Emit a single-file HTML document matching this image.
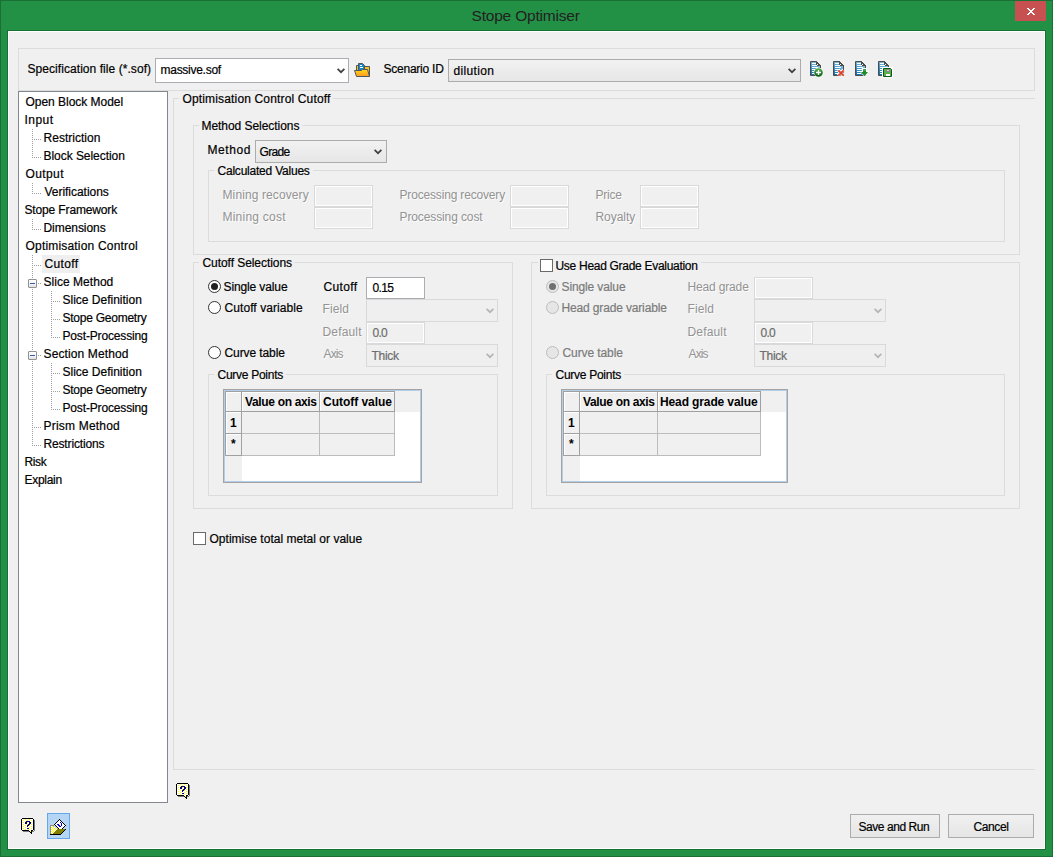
<!DOCTYPE html>
<html><head><meta charset="utf-8"><title>Stope Optimiser</title>
<style>
html,body{margin:0;padding:0;}
body{width:1053px;height:857px;position:relative;overflow:hidden;background:#229045;font-family:"Liberation Sans", sans-serif;font-size:12px;}
body>div,body>span,body>svg{position:absolute;}
.t{line-height:13px;white-space:nowrap;-webkit-text-stroke-width:0.2px;}
i{position:absolute;width:1px;height:1px;background:#a0a0a0;}
</style></head><body>
<div style="left:0;top:0;width:1053px;height:857px;background:#229045;border:1px solid #1b6f35;box-sizing:border-box"></div>
<span class="t" style="left:471.5px;top:7px;color:#222;font-size:15.5px;line-height:18px;letter-spacing:-0.193px;-webkit-text-stroke-width:0;">Stope Optimiser</span>
<div style="left:1015px;top:1px;width:31px;height:20px;background:#c75050"></div>
<svg style="left:1027px;top:8px" width="8" height="7" shape-rendering="crispEdges"><rect x="0" y="0" width="1" height="1" fill="#fff"/><rect x="1" y="0" width="1" height="1" fill="#fff"/><rect x="6" y="0" width="1" height="1" fill="#fff"/><rect x="7" y="0" width="1" height="1" fill="#fff"/><rect x="1" y="1" width="1" height="1" fill="#fff"/><rect x="2" y="1" width="1" height="1" fill="#fff"/><rect x="5" y="1" width="1" height="1" fill="#fff"/><rect x="6" y="1" width="1" height="1" fill="#fff"/><rect x="2" y="2" width="1" height="1" fill="#fff"/><rect x="3" y="2" width="1" height="1" fill="#fff"/><rect x="4" y="2" width="1" height="1" fill="#fff"/><rect x="5" y="2" width="1" height="1" fill="#fff"/><rect x="3" y="3" width="1" height="1" fill="#fff"/><rect x="4" y="3" width="1" height="1" fill="#fff"/><rect x="2" y="4" width="1" height="1" fill="#fff"/><rect x="3" y="4" width="1" height="1" fill="#fff"/><rect x="4" y="4" width="1" height="1" fill="#fff"/><rect x="5" y="4" width="1" height="1" fill="#fff"/><rect x="1" y="5" width="1" height="1" fill="#fff"/><rect x="2" y="5" width="1" height="1" fill="#fff"/><rect x="5" y="5" width="1" height="1" fill="#fff"/><rect x="6" y="5" width="1" height="1" fill="#fff"/><rect x="0" y="6" width="1" height="1" fill="#fff"/><rect x="1" y="6" width="1" height="1" fill="#fff"/><rect x="6" y="6" width="1" height="1" fill="#fff"/><rect x="7" y="6" width="1" height="1" fill="#fff"/></svg>
<div style="left:7px;top:30px;width:1039px;height:820px;border:1px solid #167232;box-sizing:border-box"></div>
<div style="left:8px;top:31px;width:1037px;height:818px;border:1px solid #fff;background:#f0f0f0;box-sizing:border-box"></div>
<div style="left:18px;top:48px;width:1017px;height:43px;border:1px solid #dcdcdc;box-sizing:border-box"></div>
<span class="t" style="left:27.5px;top:63px;color:#000;letter-spacing:0.060px;">Specification file (*.sof)</span>
<div style="left:155px;top:58px;width:194px;height:25px;border:1px solid #abadb3;background:#fff;box-sizing:border-box"></div>
<span class="t" style="left:160.5px;top:64px;color:#000;letter-spacing:-0.270px;">massive.sof</span>
<svg style="left:337px;top:68px" width="8" height="6" viewBox="0 0 8 6"><path d="M0.6 0.8 L4 4.2 L7.4 0.8" fill="none" stroke="#404040" stroke-width="1.7"/></svg>
<span class="t" style="left:383.5px;top:63px;color:#000;letter-spacing:-0.240px;">Scenario ID</span>
<div style="left:448px;top:59px;width:353px;height:23px;border:1px solid #acacac;background:linear-gradient(#f2f2f2,#e6e6e6);box-sizing:border-box"></div>
<span class="t" style="left:453.5px;top:65px;color:#000;letter-spacing:0.357px;">dilution</span>
<svg style="left:788px;top:68px" width="8" height="6" viewBox="0 0 8 6"><path d="M0.6 0.8 L4 4.2 L7.4 0.8" fill="none" stroke="#404040" stroke-width="1.7"/></svg>
<div style="left:18px;top:91px;width:150px;height:712px;border:1px solid #828790;background:#fff;box-sizing:border-box"></div>
<div style="left:42px;top:255px;width:38px;height:18px;background:#efefef"></div>
<span class="t" style="left:25.5px;top:96px;color:#000;letter-spacing:-0.027px;">Open Block Model</span>
<span class="t" style="left:24.5px;top:114px;color:#000;letter-spacing:0.450px;">Input</span>
<span class="t" style="left:43.5px;top:132px;color:#000;letter-spacing:0.020px;">Restriction</span>
<span class="t" style="left:43.5px;top:150px;color:#000;letter-spacing:-0.050px;">Block Selection</span>
<span class="t" style="left:25.5px;top:168px;color:#000;letter-spacing:0.400px;">Output</span>
<span class="t" style="left:44.5px;top:186px;color:#000;letter-spacing:-0.033px;">Verifications</span>
<span class="t" style="left:24.5px;top:204px;color:#000;letter-spacing:-0.143px;">Stope Framework</span>
<span class="t" style="left:43.5px;top:222px;color:#000;letter-spacing:-0.056px;">Dimensions</span>
<span class="t" style="left:25.5px;top:240px;color:#000;letter-spacing:0.184px;">Optimisation Control</span>
<span class="t" style="left:44.5px;top:258px;color:#000;letter-spacing:0.360px;">Cutoff</span>
<span class="t" style="left:43.5px;top:276px;color:#000;letter-spacing:0.036px;">Slice Method</span>
<span class="t" style="left:62.5px;top:294px;color:#000;">Slice Definition</span>
<span class="t" style="left:62.5px;top:312px;color:#000;letter-spacing:-0.246px;">Stope Geometry</span>
<span class="t" style="left:62.5px;top:330px;color:#000;letter-spacing:-0.157px;">Post-Processing</span>
<span class="t" style="left:43.5px;top:348px;color:#000;letter-spacing:0.123px;">Section Method</span>
<span class="t" style="left:62.5px;top:366px;color:#000;">Slice Definition</span>
<span class="t" style="left:62.5px;top:384px;color:#000;letter-spacing:-0.246px;">Stope Geometry</span>
<span class="t" style="left:62.5px;top:402px;color:#000;letter-spacing:-0.157px;">Post-Processing</span>
<span class="t" style="left:43.5px;top:420px;color:#000;letter-spacing:0.200px;">Prism Method</span>
<span class="t" style="left:43.5px;top:438px;color:#000;letter-spacing:-0.155px;">Restrictions</span>
<span class="t" style="left:24.5px;top:456px;color:#000;letter-spacing:-0.400px;">Risk</span>
<span class="t" style="left:24.5px;top:474px;color:#000;letter-spacing:-0.283px;">Explain</span>
<div style="left:173px;top:98px;width:862px;height:672px;border:1px solid #dcdcdc;box-sizing:border-box;border-right:0"></div>
<div style="left:179px;top:96px;width:154px;height:5px;background:#f0f0f0"></div>
<span class="t" style="left:182.5px;top:93px;color:#000;letter-spacing:0.154px;">Optimisation Control Cutoff</span>
<div style="left:193px;top:125px;width:827px;height:130px;border:1px solid #dcdcdc;box-sizing:border-box"></div>
<div style="left:199px;top:123px;width:103.19999999999999px;height:5px;background:#f0f0f0"></div>
<span class="t" style="left:201.5px;top:120px;color:#000;letter-spacing:-0.050px;">Method Selections</span>
<span class="t" style="left:207.5px;top:144px;color:#000;letter-spacing:0.560px;">Method</span>
<div style="left:255px;top:140px;width:132px;height:23px;border:1px solid #acacac;background:linear-gradient(#f2f2f2,#e6e6e6);box-sizing:border-box"></div>
<span class="t" style="left:259.5px;top:146px;color:#000;letter-spacing:-0.650px;">Grade</span>
<svg style="left:374px;top:149px" width="8" height="6" viewBox="0 0 8 6"><path d="M0.6 0.8 L4 4.2 L7.4 0.8" fill="none" stroke="#404040" stroke-width="1.7"/></svg>
<div style="left:208px;top:170px;width:797px;height:72px;border:1px solid #dcdcdc;box-sizing:border-box"></div>
<div style="left:214px;top:168px;width:98.5px;height:5px;background:#f0f0f0"></div>
<span class="t" style="left:217.5px;top:165px;color:#000;letter-spacing:-0.219px;">Calculated Values</span>
<span class="t" style="left:222.5px;top:189px;color:#939393;-webkit-text-stroke-width:0;text-shadow:1px 1px 0 rgba(255,255,255,0.85);letter-spacing:0.107px;">Mining recovery</span>
<span class="t" style="left:222.5px;top:211px;color:#939393;-webkit-text-stroke-width:0;text-shadow:1px 1px 0 rgba(255,255,255,0.85);letter-spacing:0.230px;">Mining cost</span>
<div style="left:314px;top:185px;width:59px;height:22px;border:1px solid #d9d9d9;box-shadow:inset 0 0 0 1px #fff;background:#f0f0f0;box-sizing:border-box"></div>
<div style="left:314px;top:207px;width:59px;height:22px;border:1px solid #d9d9d9;box-shadow:inset 0 0 0 1px #fff;background:#f0f0f0;box-sizing:border-box"></div>
<span class="t" style="left:399.5px;top:189px;color:#939393;-webkit-text-stroke-width:0;text-shadow:1px 1px 0 rgba(255,255,255,0.85);letter-spacing:-0.167px;">Processing recovery</span>
<span class="t" style="left:399.5px;top:211px;color:#939393;-webkit-text-stroke-width:0;text-shadow:1px 1px 0 rgba(255,255,255,0.85);letter-spacing:-0.114px;">Processing cost</span>
<div style="left:510px;top:185px;width:59px;height:22px;border:1px solid #d9d9d9;box-shadow:inset 0 0 0 1px #fff;background:#f0f0f0;box-sizing:border-box"></div>
<div style="left:510px;top:207px;width:59px;height:22px;border:1px solid #d9d9d9;box-shadow:inset 0 0 0 1px #fff;background:#f0f0f0;box-sizing:border-box"></div>
<span class="t" style="left:595.5px;top:189px;color:#939393;-webkit-text-stroke-width:0;text-shadow:1px 1px 0 rgba(255,255,255,0.85);letter-spacing:-0.200px;">Price</span>
<span class="t" style="left:595.5px;top:211px;color:#939393;-webkit-text-stroke-width:0;text-shadow:1px 1px 0 rgba(255,255,255,0.85);letter-spacing:-0.050px;">Royalty</span>
<div style="left:640px;top:185px;width:59px;height:22px;border:1px solid #d9d9d9;box-shadow:inset 0 0 0 1px #fff;background:#f0f0f0;box-sizing:border-box"></div>
<div style="left:640px;top:207px;width:59px;height:22px;border:1px solid #d9d9d9;box-shadow:inset 0 0 0 1px #fff;background:#f0f0f0;box-sizing:border-box"></div>
<div style="left:193px;top:262px;width:320px;height:247px;border:1px solid #dcdcdc;box-sizing:border-box"></div>
<div style="left:199px;top:260px;width:95px;height:5px;background:#f0f0f0"></div>
<span class="t" style="left:202.5px;top:257px;color:#000;letter-spacing:-0.062px;">Cutoff Selections</span>
<svg style="left:208px;top:280px" width="13" height="13" viewBox="0 0 13 13"><circle cx="6.5" cy="6.5" r="6" fill="#ffffff" stroke="#333333" stroke-width="1"/><circle cx="3.5" cy="3.5" r="3.5" fill="#212121" transform="translate(3,3)"/></svg>
<span class="t" style="left:223.5px;top:281px;color:#000;letter-spacing:-0.118px;">Single value</span>
<svg style="left:208px;top:301px" width="13" height="13" viewBox="0 0 13 13"><circle cx="6.5" cy="6.5" r="6" fill="#ffffff" stroke="#333333" stroke-width="1"/></svg>
<span class="t" style="left:224.5px;top:302px;color:#000;letter-spacing:0.071px;">Cutoff variable</span>
<svg style="left:208px;top:346px" width="13" height="13" viewBox="0 0 13 13"><circle cx="6.5" cy="6.5" r="6" fill="#ffffff" stroke="#333333" stroke-width="1"/></svg>
<span class="t" style="left:224.5px;top:347px;color:#000;letter-spacing:-0.100px;">Curve table</span>
<span class="t" style="left:323.5px;top:281px;color:#000;letter-spacing:0.360px;">Cutoff</span>
<div style="left:366px;top:277px;width:59px;height:22px;border:1px solid #abadb3;background:#fff;box-sizing:border-box"></div>
<span class="t" style="left:372.5px;top:282px;color:#000;letter-spacing:-0.667px;">0.15</span>
<span class="t" style="left:322.5px;top:303px;color:#939393;-webkit-text-stroke-width:0;text-shadow:1px 1px 0 rgba(255,255,255,0.85);letter-spacing:0.075px;">Field</span>
<div style="left:366px;top:299px;width:132px;height:23px;border:1px solid #d9d9d9;background:#efefef;box-sizing:border-box"></div>
<svg style="left:486px;top:308px" width="8" height="6" viewBox="0 0 8 6"><path d="M0.6 0.8 L4 4.2 L7.4 0.8" fill="none" stroke="#b5b5b5" stroke-width="1.7"/></svg>
<span class="t" style="left:322.5px;top:326px;color:#939393;-webkit-text-stroke-width:0;text-shadow:1px 1px 0 rgba(255,255,255,0.85);letter-spacing:0.167px;">Default</span>
<div style="left:366px;top:322px;width:59px;height:22px;border:1px solid #d9d9d9;box-shadow:inset 0 0 0 1px #fff;background:#f0f0f0;box-sizing:border-box"></div>
<span class="t" style="left:372.5px;top:327px;color:#6d6d6d;letter-spacing:-0.700px;">0.0</span>
<span class="t" style="left:323.5px;top:348px;color:#939393;-webkit-text-stroke-width:0;text-shadow:1px 1px 0 rgba(255,255,255,0.85);letter-spacing:-0.867px;">Axis</span>
<div style="left:366px;top:344px;width:132px;height:23px;border:1px solid #d9d9d9;background:#efefef;box-sizing:border-box"></div>
<span class="t" style="left:371.5px;top:350px;color:#6d6d6d;letter-spacing:-0.300px;">Thick</span>
<svg style="left:486px;top:353px" width="8" height="6" viewBox="0 0 8 6"><path d="M0.6 0.8 L4 4.2 L7.4 0.8" fill="none" stroke="#b5b5b5" stroke-width="1.7"/></svg>
<div style="left:208px;top:374px;width:290px;height:122px;border:1px solid #dcdcdc;box-sizing:border-box"></div>
<div style="left:214px;top:372px;width:72px;height:5px;background:#f0f0f0"></div>
<span class="t" style="left:217.5px;top:369px;color:#000;letter-spacing:-0.273px;">Curve Points</span>
<div style="left:531px;top:262px;width:489px;height:247px;border:1px solid #dcdcdc;box-sizing:border-box"></div>
<div style="left:538px;top:255px;width:163px;height:16px;background:#f0f0f0"></div>
<div style="left:540px;top:259px;width:13px;height:13px;border:1px solid #6a6a6a;background:#fff;box-sizing:border-box"></div>
<span class="t" style="left:555.5px;top:260px;color:#000;letter-spacing:-0.292px;">Use Head Grade Evaluation</span>
<svg style="left:546px;top:280px" width="13" height="13" viewBox="0 0 13 13"><circle cx="6.5" cy="6.5" r="6" fill="#e6e6e6" stroke="#bcbcbc" stroke-width="1"/><circle cx="3.5" cy="3.5" r="3.5" fill="#707070" transform="translate(3,3)"/></svg>
<span class="t" style="left:561.5px;top:281px;color:#7b7b7b;letter-spacing:-0.118px;">Single value</span>
<svg style="left:546px;top:301px" width="13" height="13" viewBox="0 0 13 13"><circle cx="6.5" cy="6.5" r="6" fill="#e6e6e6" stroke="#bcbcbc" stroke-width="1"/></svg>
<span class="t" style="left:561.5px;top:302px;color:#7b7b7b;letter-spacing:-0.150px;">Head grade variable</span>
<svg style="left:546px;top:346px" width="13" height="13" viewBox="0 0 13 13"><circle cx="6.5" cy="6.5" r="6" fill="#e6e6e6" stroke="#bcbcbc" stroke-width="1"/></svg>
<span class="t" style="left:562.5px;top:347px;color:#7b7b7b;letter-spacing:-0.100px;">Curve table</span>
<span class="t" style="left:687.5px;top:281px;color:#939393;-webkit-text-stroke-width:0;text-shadow:1px 1px 0 rgba(255,255,255,0.85);letter-spacing:-0.156px;">Head grade</span>
<div style="left:754px;top:277px;width:59px;height:22px;border:1px solid #d9d9d9;box-shadow:inset 0 0 0 1px #fff;background:#f0f0f0;box-sizing:border-box"></div>
<span class="t" style="left:687.5px;top:303px;color:#939393;-webkit-text-stroke-width:0;text-shadow:1px 1px 0 rgba(255,255,255,0.85);letter-spacing:0.075px;">Field</span>
<div style="left:754px;top:299px;width:132px;height:23px;border:1px solid #d9d9d9;background:#efefef;box-sizing:border-box"></div>
<svg style="left:874px;top:308px" width="8" height="6" viewBox="0 0 8 6"><path d="M0.6 0.8 L4 4.2 L7.4 0.8" fill="none" stroke="#b5b5b5" stroke-width="1.7"/></svg>
<span class="t" style="left:687.5px;top:326px;color:#939393;-webkit-text-stroke-width:0;text-shadow:1px 1px 0 rgba(255,255,255,0.85);letter-spacing:0.167px;">Default</span>
<div style="left:754px;top:322px;width:59px;height:22px;border:1px solid #d9d9d9;box-shadow:inset 0 0 0 1px #fff;background:#f0f0f0;box-sizing:border-box"></div>
<span class="t" style="left:760.5px;top:327px;color:#6d6d6d;letter-spacing:-0.700px;">0.0</span>
<span class="t" style="left:688.5px;top:348px;color:#939393;-webkit-text-stroke-width:0;text-shadow:1px 1px 0 rgba(255,255,255,0.85);letter-spacing:-0.867px;">Axis</span>
<div style="left:754px;top:344px;width:132px;height:23px;border:1px solid #d9d9d9;background:#efefef;box-sizing:border-box"></div>
<span class="t" style="left:759.5px;top:350px;color:#6d6d6d;letter-spacing:-0.300px;">Thick</span>
<svg style="left:874px;top:353px" width="8" height="6" viewBox="0 0 8 6"><path d="M0.6 0.8 L4 4.2 L7.4 0.8" fill="none" stroke="#b5b5b5" stroke-width="1.7"/></svg>
<div style="left:546px;top:374px;width:459px;height:122px;border:1px solid #dcdcdc;box-sizing:border-box"></div>
<div style="left:552px;top:372px;width:72px;height:5px;background:#f0f0f0"></div>
<span class="t" style="left:555.5px;top:369px;color:#000;letter-spacing:-0.273px;">Curve Points</span>
<div style="left:193px;top:532px;width:13px;height:13px;border:1px solid #6a6a6a;background:#fff;box-sizing:border-box"></div>
<span class="t" style="left:209.5px;top:533px;color:#000;letter-spacing:0.021px;">Optimise total metal or value</span>
<div style="left:850px;top:814px;width:90px;height:24px;border:1px solid #acacac;background:linear-gradient(#f0f0f0,#e5e5e5);box-sizing:border-box"></div>
<span class="t" style="left:858.5px;top:821px;color:#000;letter-spacing:-0.436px;">Save and Run</span>
<div style="left:948px;top:814px;width:86px;height:24px;border:1px solid #acacac;background:linear-gradient(#f0f0f0,#e5e5e5);box-sizing:border-box"></div>
<span class="t" style="left:973.5px;top:821px;color:#000;letter-spacing:-0.400px;">Cancel</span>
<div style="left:223px;top:389px;width:199px;height:94px;border:1px solid #a3a3a3;box-shadow:inset 0 0 0 1px #b4cde8;background:#fff;box-sizing:border-box"></div>
<div style="left:225px;top:391px;width:195px;height:21px;background:#f0f0f0"></div>
<div style="left:225px;top:391px;width:17px;height:90px;background:#f0f0f0"></div>
<div style="left:241px;top:411px;width:79px;height:23px;border:1px solid #bcbcbc;background:#f0f0f0;box-sizing:border-box"></div>
<div style="left:319px;top:411px;width:76px;height:23px;border:1px solid #bcbcbc;background:#f0f0f0;box-sizing:border-box"></div>
<div style="left:241px;top:433px;width:79px;height:23px;border:1px solid #bcbcbc;background:#f0f0f0;box-sizing:border-box"></div>
<div style="left:319px;top:433px;width:76px;height:23px;border:1px solid #bcbcbc;background:#f0f0f0;box-sizing:border-box"></div>
<div style="left:225px;top:391px;width:17px;height:21px;border:1px solid #a0a0a0;box-shadow:inset 1px 1px 0 #fff;background:#f0f0f0;box-sizing:border-box"></div>
<div style="left:241px;top:391px;width:79px;height:21px;border:1px solid #a0a0a0;box-shadow:inset 1px 1px 0 #fff;background:#f0f0f0;box-sizing:border-box"></div>
<div style="left:319px;top:391px;width:76px;height:21px;border:1px solid #a0a0a0;box-shadow:inset 1px 1px 0 #fff;background:#f0f0f0;box-sizing:border-box"></div>
<div style="left:225px;top:411px;width:17px;height:23px;border:1px solid #a0a0a0;box-shadow:inset 1px 1px 0 #fff;background:#f0f0f0;box-sizing:border-box"></div>
<div style="left:225px;top:433px;width:17px;height:23px;border:1px solid #a0a0a0;box-shadow:inset 1px 1px 0 #fff;background:#f0f0f0;box-sizing:border-box"></div>
<span class="t" style="left:245px;top:396px;color:#000;font-weight:bold;-webkit-text-stroke-width:0;letter-spacing:-0.333px;">Value on axis</span>
<span class="t" style="left:323px;top:396px;color:#000;font-weight:bold;-webkit-text-stroke-width:0;letter-spacing:-0.036px;">Cutoff value</span>
<span class="t" style="left:230px;top:417px;color:#000;font-weight:bold;-webkit-text-stroke-width:0;">1</span>
<span class="t" style="left:231px;top:438px;color:#000;font-weight:bold;-webkit-text-stroke-width:0;">*</span>
<div style="left:561px;top:389px;width:227px;height:94px;border:1px solid #a3a3a3;box-shadow:inset 0 0 0 1px #b4cde8;background:#fff;box-sizing:border-box"></div>
<div style="left:563px;top:391px;width:223px;height:21px;background:#f0f0f0"></div>
<div style="left:563px;top:391px;width:17px;height:90px;background:#f0f0f0"></div>
<div style="left:579px;top:411px;width:79px;height:23px;border:1px solid #bcbcbc;background:#f0f0f0;box-sizing:border-box"></div>
<div style="left:657px;top:411px;width:104px;height:23px;border:1px solid #bcbcbc;background:#f0f0f0;box-sizing:border-box"></div>
<div style="left:579px;top:433px;width:79px;height:23px;border:1px solid #bcbcbc;background:#f0f0f0;box-sizing:border-box"></div>
<div style="left:657px;top:433px;width:104px;height:23px;border:1px solid #bcbcbc;background:#f0f0f0;box-sizing:border-box"></div>
<div style="left:563px;top:391px;width:17px;height:21px;border:1px solid #a0a0a0;box-shadow:inset 1px 1px 0 #fff;background:#f0f0f0;box-sizing:border-box"></div>
<div style="left:579px;top:391px;width:79px;height:21px;border:1px solid #a0a0a0;box-shadow:inset 1px 1px 0 #fff;background:#f0f0f0;box-sizing:border-box"></div>
<div style="left:657px;top:391px;width:104px;height:21px;border:1px solid #a0a0a0;box-shadow:inset 1px 1px 0 #fff;background:#f0f0f0;box-sizing:border-box"></div>
<div style="left:563px;top:411px;width:17px;height:23px;border:1px solid #a0a0a0;box-shadow:inset 1px 1px 0 #fff;background:#f0f0f0;box-sizing:border-box"></div>
<div style="left:563px;top:433px;width:17px;height:23px;border:1px solid #a0a0a0;box-shadow:inset 1px 1px 0 #fff;background:#f0f0f0;box-sizing:border-box"></div>
<span class="t" style="left:583px;top:396px;color:#000;font-weight:bold;-webkit-text-stroke-width:0;letter-spacing:-0.333px;">Value on axis</span>
<span class="t" style="left:660px;top:396px;color:#000;font-weight:bold;-webkit-text-stroke-width:0;letter-spacing:-0.120px;">Head grade value</span>
<span class="t" style="left:568px;top:417px;color:#000;font-weight:bold;-webkit-text-stroke-width:0;">1</span>
<span class="t" style="left:569px;top:438px;color:#000;font-weight:bold;-webkit-text-stroke-width:0;">*</span>
<i style="left:32px;top:129px"></i>
<i style="left:32px;top:131px"></i>
<i style="left:32px;top:133px"></i>
<i style="left:32px;top:135px"></i>
<i style="left:32px;top:137px"></i>
<i style="left:32px;top:139px"></i>
<i style="left:32px;top:141px"></i>
<i style="left:32px;top:143px"></i>
<i style="left:32px;top:145px"></i>
<i style="left:32px;top:147px"></i>
<i style="left:32px;top:149px"></i>
<i style="left:32px;top:151px"></i>
<i style="left:32px;top:153px"></i>
<i style="left:32px;top:155px"></i>
<i style="left:32px;top:157px"></i>
<i style="left:34px;top:139px"></i>
<i style="left:36px;top:139px"></i>
<i style="left:38px;top:139px"></i>
<i style="left:40px;top:139px"></i>
<i style="left:34px;top:157px"></i>
<i style="left:36px;top:157px"></i>
<i style="left:38px;top:157px"></i>
<i style="left:40px;top:157px"></i>
<i style="left:32px;top:183px"></i>
<i style="left:32px;top:185px"></i>
<i style="left:32px;top:187px"></i>
<i style="left:32px;top:189px"></i>
<i style="left:32px;top:191px"></i>
<i style="left:32px;top:193px"></i>
<i style="left:34px;top:193px"></i>
<i style="left:36px;top:193px"></i>
<i style="left:38px;top:193px"></i>
<i style="left:40px;top:193px"></i>
<i style="left:32px;top:219px"></i>
<i style="left:32px;top:221px"></i>
<i style="left:32px;top:223px"></i>
<i style="left:32px;top:225px"></i>
<i style="left:32px;top:227px"></i>
<i style="left:32px;top:229px"></i>
<i style="left:34px;top:229px"></i>
<i style="left:36px;top:229px"></i>
<i style="left:38px;top:229px"></i>
<i style="left:40px;top:229px"></i>
<i style="left:32px;top:255px"></i>
<i style="left:32px;top:257px"></i>
<i style="left:32px;top:259px"></i>
<i style="left:32px;top:261px"></i>
<i style="left:32px;top:263px"></i>
<i style="left:32px;top:265px"></i>
<i style="left:32px;top:267px"></i>
<i style="left:32px;top:269px"></i>
<i style="left:32px;top:271px"></i>
<i style="left:32px;top:273px"></i>
<i style="left:32px;top:275px"></i>
<i style="left:32px;top:277px"></i>
<i style="left:32px;top:279px"></i>
<i style="left:32px;top:281px"></i>
<i style="left:32px;top:283px"></i>
<i style="left:32px;top:285px"></i>
<i style="left:32px;top:287px"></i>
<i style="left:32px;top:289px"></i>
<i style="left:32px;top:291px"></i>
<i style="left:32px;top:293px"></i>
<i style="left:32px;top:295px"></i>
<i style="left:32px;top:297px"></i>
<i style="left:32px;top:299px"></i>
<i style="left:32px;top:301px"></i>
<i style="left:32px;top:303px"></i>
<i style="left:32px;top:305px"></i>
<i style="left:32px;top:307px"></i>
<i style="left:32px;top:309px"></i>
<i style="left:32px;top:311px"></i>
<i style="left:32px;top:313px"></i>
<i style="left:32px;top:315px"></i>
<i style="left:32px;top:317px"></i>
<i style="left:32px;top:319px"></i>
<i style="left:32px;top:321px"></i>
<i style="left:32px;top:323px"></i>
<i style="left:32px;top:325px"></i>
<i style="left:32px;top:327px"></i>
<i style="left:32px;top:329px"></i>
<i style="left:32px;top:331px"></i>
<i style="left:32px;top:333px"></i>
<i style="left:32px;top:335px"></i>
<i style="left:32px;top:337px"></i>
<i style="left:32px;top:339px"></i>
<i style="left:32px;top:341px"></i>
<i style="left:32px;top:343px"></i>
<i style="left:32px;top:345px"></i>
<i style="left:32px;top:347px"></i>
<i style="left:32px;top:349px"></i>
<i style="left:32px;top:351px"></i>
<i style="left:32px;top:353px"></i>
<i style="left:32px;top:355px"></i>
<i style="left:32px;top:357px"></i>
<i style="left:32px;top:359px"></i>
<i style="left:32px;top:361px"></i>
<i style="left:32px;top:363px"></i>
<i style="left:32px;top:365px"></i>
<i style="left:32px;top:367px"></i>
<i style="left:32px;top:369px"></i>
<i style="left:32px;top:371px"></i>
<i style="left:32px;top:373px"></i>
<i style="left:32px;top:375px"></i>
<i style="left:32px;top:377px"></i>
<i style="left:32px;top:379px"></i>
<i style="left:32px;top:381px"></i>
<i style="left:32px;top:383px"></i>
<i style="left:32px;top:385px"></i>
<i style="left:32px;top:387px"></i>
<i style="left:32px;top:389px"></i>
<i style="left:32px;top:391px"></i>
<i style="left:32px;top:393px"></i>
<i style="left:32px;top:395px"></i>
<i style="left:32px;top:397px"></i>
<i style="left:32px;top:399px"></i>
<i style="left:32px;top:401px"></i>
<i style="left:32px;top:403px"></i>
<i style="left:32px;top:405px"></i>
<i style="left:32px;top:407px"></i>
<i style="left:32px;top:409px"></i>
<i style="left:32px;top:411px"></i>
<i style="left:32px;top:413px"></i>
<i style="left:32px;top:415px"></i>
<i style="left:32px;top:417px"></i>
<i style="left:32px;top:419px"></i>
<i style="left:32px;top:421px"></i>
<i style="left:32px;top:423px"></i>
<i style="left:32px;top:425px"></i>
<i style="left:32px;top:427px"></i>
<i style="left:32px;top:429px"></i>
<i style="left:32px;top:431px"></i>
<i style="left:32px;top:433px"></i>
<i style="left:32px;top:435px"></i>
<i style="left:32px;top:437px"></i>
<i style="left:32px;top:439px"></i>
<i style="left:32px;top:441px"></i>
<i style="left:32px;top:443px"></i>
<i style="left:32px;top:445px"></i>
<i style="left:34px;top:265px"></i>
<i style="left:36px;top:265px"></i>
<i style="left:38px;top:265px"></i>
<i style="left:40px;top:265px"></i>
<i style="left:34px;top:427px"></i>
<i style="left:36px;top:427px"></i>
<i style="left:38px;top:427px"></i>
<i style="left:40px;top:427px"></i>
<i style="left:34px;top:445px"></i>
<i style="left:36px;top:445px"></i>
<i style="left:38px;top:445px"></i>
<i style="left:40px;top:445px"></i>
<i style="left:38px;top:283px"></i>
<i style="left:40px;top:283px"></i>
<i style="left:51px;top:291px"></i>
<i style="left:51px;top:293px"></i>
<i style="left:51px;top:295px"></i>
<i style="left:51px;top:297px"></i>
<i style="left:51px;top:299px"></i>
<i style="left:51px;top:301px"></i>
<i style="left:51px;top:303px"></i>
<i style="left:51px;top:305px"></i>
<i style="left:51px;top:307px"></i>
<i style="left:51px;top:309px"></i>
<i style="left:51px;top:311px"></i>
<i style="left:51px;top:313px"></i>
<i style="left:51px;top:315px"></i>
<i style="left:51px;top:317px"></i>
<i style="left:51px;top:319px"></i>
<i style="left:51px;top:321px"></i>
<i style="left:51px;top:323px"></i>
<i style="left:51px;top:325px"></i>
<i style="left:51px;top:327px"></i>
<i style="left:51px;top:329px"></i>
<i style="left:51px;top:331px"></i>
<i style="left:51px;top:333px"></i>
<i style="left:51px;top:335px"></i>
<i style="left:51px;top:337px"></i>
<i style="left:53px;top:301px"></i>
<i style="left:55px;top:301px"></i>
<i style="left:57px;top:301px"></i>
<i style="left:59px;top:301px"></i>
<i style="left:53px;top:319px"></i>
<i style="left:55px;top:319px"></i>
<i style="left:57px;top:319px"></i>
<i style="left:59px;top:319px"></i>
<i style="left:53px;top:337px"></i>
<i style="left:55px;top:337px"></i>
<i style="left:57px;top:337px"></i>
<i style="left:59px;top:337px"></i>
<div style="left:28px;top:279px;width:9px;height:9px;border:1px solid #919191;border-radius:1px;background:linear-gradient(#fff,#f4f4f4 50%,#e2e2e2);box-sizing:border-box"></div>
<div style="left:30px;top:283px;width:5px;height:1px;background:#3c5bab"></div>
<i style="left:38px;top:355px"></i>
<i style="left:40px;top:355px"></i>
<i style="left:51px;top:363px"></i>
<i style="left:51px;top:365px"></i>
<i style="left:51px;top:367px"></i>
<i style="left:51px;top:369px"></i>
<i style="left:51px;top:371px"></i>
<i style="left:51px;top:373px"></i>
<i style="left:51px;top:375px"></i>
<i style="left:51px;top:377px"></i>
<i style="left:51px;top:379px"></i>
<i style="left:51px;top:381px"></i>
<i style="left:51px;top:383px"></i>
<i style="left:51px;top:385px"></i>
<i style="left:51px;top:387px"></i>
<i style="left:51px;top:389px"></i>
<i style="left:51px;top:391px"></i>
<i style="left:51px;top:393px"></i>
<i style="left:51px;top:395px"></i>
<i style="left:51px;top:397px"></i>
<i style="left:51px;top:399px"></i>
<i style="left:51px;top:401px"></i>
<i style="left:51px;top:403px"></i>
<i style="left:51px;top:405px"></i>
<i style="left:51px;top:407px"></i>
<i style="left:51px;top:409px"></i>
<i style="left:53px;top:373px"></i>
<i style="left:55px;top:373px"></i>
<i style="left:57px;top:373px"></i>
<i style="left:59px;top:373px"></i>
<i style="left:53px;top:391px"></i>
<i style="left:55px;top:391px"></i>
<i style="left:57px;top:391px"></i>
<i style="left:59px;top:391px"></i>
<i style="left:53px;top:409px"></i>
<i style="left:55px;top:409px"></i>
<i style="left:57px;top:409px"></i>
<i style="left:59px;top:409px"></i>
<div style="left:28px;top:351px;width:9px;height:9px;border:1px solid #919191;border-radius:1px;background:linear-gradient(#fff,#f4f4f4 50%,#e2e2e2);box-sizing:border-box"></div>
<div style="left:30px;top:355px;width:5px;height:1px;background:#3c5bab"></div>
<svg style="left:809px;top:60px" width="18" height="18" viewBox="0 0 18 18"><defs><linearGradient id="dg" x1="0.8" y1="0" x2="0.2" y2="1"><stop offset="0" stop-color="#9ad0ef"/><stop offset="1" stop-color="#0f6fae"/></linearGradient><linearGradient id="gg" x1="0" y1="0" x2="0" y2="1"><stop offset="0" stop-color="#58b04c"/><stop offset="1" stop-color="#005a12"/></linearGradient></defs><path d="M1.5 1.5 H7.5 L11.5 5.5 V15.5 H1.5 Z" fill="url(#dg)" stroke="#4b4b4b"/><path d="M7.5 1.5 L11.5 5.5 H7.5 Z" fill="#4b4b4b" stroke="#4b4b4b"/><rect x="8" y="4" width="1" height="1" fill="#fff"/><rect x="3" y="3" width="4" height="1" fill="#fff"/><rect x="3" y="5" width="5" height="1" fill="#fff"/><rect x="3" y="7" width="6" height="1" fill="#fff"/><rect x="3" y="9" width="5" height="1" fill="#fff"/><rect x="3" y="11" width="4" height="1" fill="#fff"/><rect x="3" y="13" width="4" height="1" fill="#fff"/><circle cx="9.5" cy="12.5" r="4.7" fill="#fff"/><circle cx="9.5" cy="12.5" r="4.3" fill="url(#gg)"/><path d="M7 12.5 H12 M9.5 10 V15" stroke="#fff" stroke-width="1.4"/></svg>
<svg style="left:832px;top:60px" width="18" height="18" viewBox="0 0 18 18"><path d="M1.5 1.5 H7.5 L11.5 5.5 V15.5 H1.5 Z" fill="url(#dg)" stroke="#4b4b4b"/><path d="M7.5 1.5 L11.5 5.5 H7.5 Z" fill="#4b4b4b" stroke="#4b4b4b"/><rect x="8" y="4" width="1" height="1" fill="#fff"/><rect x="3" y="3" width="4" height="1" fill="#fff"/><rect x="3" y="5" width="5" height="1" fill="#fff"/><rect x="3" y="7" width="6" height="1" fill="#fff"/><rect x="3" y="9" width="5" height="1" fill="#fff"/><rect x="3" y="11" width="4" height="1" fill="#fff"/><rect x="3" y="13" width="4" height="1" fill="#fff"/><path d="M6 10 L11.5 15.5 M11.5 10 L6 15.5" stroke="#fff" stroke-width="3.2"/><path d="M6.3 10.3 L11.7 15.7 M11.7 10.3 L6.3 15.7" stroke="#d8402a" stroke-width="1.9"/></svg>
<svg style="left:854px;top:60px" width="18" height="18" viewBox="0 0 18 18"><path d="M1.5 1.5 H7.5 L11.5 5.5 V15.5 H1.5 Z" fill="url(#dg)" stroke="#4b4b4b"/><path d="M7.5 1.5 L11.5 5.5 H7.5 Z" fill="#4b4b4b" stroke="#4b4b4b"/><rect x="8" y="4" width="1" height="1" fill="#fff"/><rect x="3" y="3" width="4" height="1" fill="#fff"/><rect x="3" y="5" width="5" height="1" fill="#fff"/><rect x="3" y="7" width="6" height="1" fill="#fff"/><rect x="3" y="9" width="5" height="1" fill="#fff"/><rect x="3" y="11" width="4" height="1" fill="#fff"/><rect x="3" y="13" width="4" height="1" fill="#fff"/><path d="M8 8 H13 V11 H15.5 L10.5 17 L5.5 11 H8 Z" fill="#fff"/><path d="M9 9 H12 V12 H14 L10.5 16.2 L7 12 H9 Z" fill="#1f8a2a"/><path d="M9 9 H12 V11 H9 Z" fill="#3aa542"/></svg>
<svg style="left:877px;top:60px" width="18" height="18" viewBox="0 0 18 18"><path d="M1.5 1.5 H7.5 L11.5 5.5 V15.5 H1.5 Z" fill="url(#dg)" stroke="#4b4b4b"/><path d="M7.5 1.5 L11.5 5.5 H7.5 Z" fill="#4b4b4b" stroke="#4b4b4b"/><rect x="8" y="4" width="1" height="1" fill="#fff"/><rect x="3" y="3" width="4" height="1" fill="#fff"/><rect x="3" y="5" width="5" height="1" fill="#fff"/><rect x="3" y="7" width="6" height="1" fill="#fff"/><rect x="3" y="9" width="5" height="1" fill="#fff"/><rect x="3" y="11" width="4" height="1" fill="#fff"/><rect x="3" y="13" width="4" height="1" fill="#fff"/><rect x="5" y="7" width="11" height="11" fill="#fff"/><path d="M6.5 8.5 H13.5 L14.5 9.5 V16.5 H6.5 Z" fill="#5bb04c" stroke="#0b5a16"/><rect x="9" y="9" width="4" height="3" fill="#888"/><rect x="10" y="10" width="2" height="1" fill="#d0d0d0"/><rect x="9" y="14" width="4" height="2" fill="#fff"/></svg>
<svg style="left:353px;top:62px" width="18" height="16" viewBox="0 0 18 16"><defs><linearGradient id="fg" x1="0" y1="0" x2="0" y2="1"><stop offset="0" stop-color="#ffd617"/><stop offset="1" stop-color="#ff9a1f"/></linearGradient></defs><path d="M3.5 8.5 V3.5 H5.5 V8.5 M11.5 8.5 V4.5 H16.5 V14.5" fill="#f7c21a" stroke="#4e5660"/><path d="M5.5 9.5 V1.5 H9.5 L11.5 3.5 V9.5" fill="#1b87c9" stroke="#4e5660"/><rect x="7" y="3" width="2" height="1" fill="#fff"/><rect x="7" y="5" width="3" height="1" fill="#fff"/><path d="M1.5 8.5 H8.5 L9.5 7.5 H14.5 L16.5 14.5 H3.5 Z" fill="url(#fg)" stroke="#4e5660"/></svg>
<svg style="left:176px;top:783px" width="14" height="16" shape-rendering="crispEdges"><rect x="1" y="0" width="1" height="1" fill="#000"/><rect x="2" y="0" width="1" height="1" fill="#000"/><rect x="3" y="0" width="1" height="1" fill="#000"/><rect x="4" y="0" width="1" height="1" fill="#000"/><rect x="5" y="0" width="1" height="1" fill="#000"/><rect x="6" y="0" width="1" height="1" fill="#000"/><rect x="7" y="0" width="1" height="1" fill="#000"/><rect x="8" y="0" width="1" height="1" fill="#000"/><rect x="9" y="0" width="1" height="1" fill="#000"/><rect x="10" y="0" width="1" height="1" fill="#000"/><rect x="11" y="0" width="1" height="1" fill="#000"/><rect x="0" y="1" width="1" height="1" fill="#000"/><rect x="1" y="1" width="1" height="1" fill="#fff"/><rect x="2" y="1" width="1" height="1" fill="#fff"/><rect x="3" y="1" width="1" height="1" fill="#fff"/><rect x="4" y="1" width="1" height="1" fill="#ffff00"/><rect x="5" y="1" width="1" height="1" fill="#fff"/><rect x="6" y="1" width="1" height="1" fill="#fff"/><rect x="7" y="1" width="1" height="1" fill="#fff"/><rect x="8" y="1" width="1" height="1" fill="#ffff00"/><rect x="9" y="1" width="1" height="1" fill="#fff"/><rect x="10" y="1" width="1" height="1" fill="#fff"/><rect x="11" y="1" width="1" height="1" fill="#fff"/><rect x="12" y="1" width="1" height="1" fill="#000"/><rect x="0" y="2" width="1" height="1" fill="#000"/><rect x="1" y="2" width="1" height="1" fill="#fff"/><rect x="2" y="2" width="1" height="1" fill="#ffff00"/><rect x="3" y="2" width="1" height="1" fill="#fff"/><rect x="4" y="2" width="1" height="1" fill="#fff"/><rect x="5" y="2" width="1" height="1" fill="#fff"/><rect x="6" y="2" width="1" height="1" fill="#ffff00"/><rect x="7" y="2" width="1" height="1" fill="#fff"/><rect x="8" y="2" width="1" height="1" fill="#fff"/><rect x="9" y="2" width="1" height="1" fill="#fff"/><rect x="10" y="2" width="1" height="1" fill="#ffff00"/><rect x="11" y="2" width="1" height="1" fill="#fff"/><rect x="12" y="2" width="1" height="1" fill="#000"/><rect x="13" y="2" width="1" height="1" fill="#7a7a7a"/><rect x="0" y="3" width="1" height="1" fill="#000"/><rect x="1" y="3" width="1" height="1" fill="#fff"/><rect x="2" y="3" width="1" height="1" fill="#fff"/><rect x="3" y="3" width="1" height="1" fill="#fff"/><rect x="4" y="3" width="1" height="1" fill="#ffff00"/><rect x="5" y="3" width="1" height="1" fill="#000080"/><rect x="6" y="3" width="1" height="1" fill="#000080"/><rect x="7" y="3" width="1" height="1" fill="#000080"/><rect x="8" y="3" width="1" height="1" fill="#000080"/><rect x="9" y="3" width="1" height="1" fill="#fff"/><rect x="10" y="3" width="1" height="1" fill="#fff"/><rect x="11" y="3" width="1" height="1" fill="#fff"/><rect x="12" y="3" width="1" height="1" fill="#000"/><rect x="13" y="3" width="1" height="1" fill="#7a7a7a"/><rect x="0" y="4" width="1" height="1" fill="#000"/><rect x="1" y="4" width="1" height="1" fill="#fff"/><rect x="2" y="4" width="1" height="1" fill="#ffff00"/><rect x="3" y="4" width="1" height="1" fill="#fff"/><rect x="4" y="4" width="1" height="1" fill="#000080"/><rect x="5" y="4" width="1" height="1" fill="#000080"/><rect x="6" y="4" width="1" height="1" fill="#ffff00"/><rect x="7" y="4" width="1" height="1" fill="#fff"/><rect x="8" y="4" width="1" height="1" fill="#000080"/><rect x="9" y="4" width="1" height="1" fill="#000080"/><rect x="10" y="4" width="1" height="1" fill="#ffff00"/><rect x="11" y="4" width="1" height="1" fill="#fff"/><rect x="12" y="4" width="1" height="1" fill="#000"/><rect x="13" y="4" width="1" height="1" fill="#7a7a7a"/><rect x="0" y="5" width="1" height="1" fill="#000"/><rect x="1" y="5" width="1" height="1" fill="#fff"/><rect x="2" y="5" width="1" height="1" fill="#fff"/><rect x="3" y="5" width="1" height="1" fill="#fff"/><rect x="4" y="5" width="1" height="1" fill="#000080"/><rect x="5" y="5" width="1" height="1" fill="#000080"/><rect x="6" y="5" width="1" height="1" fill="#fff"/><rect x="7" y="5" width="1" height="1" fill="#fff"/><rect x="8" y="5" width="1" height="1" fill="#000080"/><rect x="9" y="5" width="1" height="1" fill="#000080"/><rect x="10" y="5" width="1" height="1" fill="#fff"/><rect x="11" y="5" width="1" height="1" fill="#fff"/><rect x="12" y="5" width="1" height="1" fill="#000"/><rect x="13" y="5" width="1" height="1" fill="#7a7a7a"/><rect x="0" y="6" width="1" height="1" fill="#000"/><rect x="1" y="6" width="1" height="1" fill="#fff"/><rect x="2" y="6" width="1" height="1" fill="#ffff00"/><rect x="3" y="6" width="1" height="1" fill="#fff"/><rect x="4" y="6" width="1" height="1" fill="#fff"/><rect x="5" y="6" width="1" height="1" fill="#fff"/><rect x="6" y="6" width="1" height="1" fill="#ffff00"/><rect x="7" y="6" width="1" height="1" fill="#000080"/><rect x="8" y="6" width="1" height="1" fill="#000080"/><rect x="9" y="6" width="1" height="1" fill="#fff"/><rect x="10" y="6" width="1" height="1" fill="#ffff00"/><rect x="11" y="6" width="1" height="1" fill="#fff"/><rect x="12" y="6" width="1" height="1" fill="#000"/><rect x="13" y="6" width="1" height="1" fill="#7a7a7a"/><rect x="0" y="7" width="1" height="1" fill="#000"/><rect x="1" y="7" width="1" height="1" fill="#fff"/><rect x="2" y="7" width="1" height="1" fill="#fff"/><rect x="3" y="7" width="1" height="1" fill="#fff"/><rect x="4" y="7" width="1" height="1" fill="#ffff00"/><rect x="5" y="7" width="1" height="1" fill="#fff"/><rect x="6" y="7" width="1" height="1" fill="#000080"/><rect x="7" y="7" width="1" height="1" fill="#000080"/><rect x="8" y="7" width="1" height="1" fill="#ffff00"/><rect x="9" y="7" width="1" height="1" fill="#fff"/><rect x="10" y="7" width="1" height="1" fill="#fff"/><rect x="11" y="7" width="1" height="1" fill="#fff"/><rect x="12" y="7" width="1" height="1" fill="#000"/><rect x="13" y="7" width="1" height="1" fill="#7a7a7a"/><rect x="0" y="8" width="1" height="1" fill="#000"/><rect x="1" y="8" width="1" height="1" fill="#fff"/><rect x="2" y="8" width="1" height="1" fill="#ffff00"/><rect x="3" y="8" width="1" height="1" fill="#fff"/><rect x="4" y="8" width="1" height="1" fill="#fff"/><rect x="5" y="8" width="1" height="1" fill="#fff"/><rect x="6" y="8" width="1" height="1" fill="#000080"/><rect x="7" y="8" width="1" height="1" fill="#fff"/><rect x="8" y="8" width="1" height="1" fill="#fff"/><rect x="9" y="8" width="1" height="1" fill="#fff"/><rect x="10" y="8" width="1" height="1" fill="#ffff00"/><rect x="11" y="8" width="1" height="1" fill="#fff"/><rect x="12" y="8" width="1" height="1" fill="#000"/><rect x="13" y="8" width="1" height="1" fill="#7a7a7a"/><rect x="0" y="9" width="1" height="1" fill="#000"/><rect x="1" y="9" width="1" height="1" fill="#fff"/><rect x="2" y="9" width="1" height="1" fill="#fff"/><rect x="3" y="9" width="1" height="1" fill="#fff"/><rect x="4" y="9" width="1" height="1" fill="#ffff00"/><rect x="5" y="9" width="1" height="1" fill="#fff"/><rect x="6" y="9" width="1" height="1" fill="#fff"/><rect x="7" y="9" width="1" height="1" fill="#fff"/><rect x="8" y="9" width="1" height="1" fill="#ffff00"/><rect x="9" y="9" width="1" height="1" fill="#fff"/><rect x="10" y="9" width="1" height="1" fill="#fff"/><rect x="11" y="9" width="1" height="1" fill="#fff"/><rect x="12" y="9" width="1" height="1" fill="#000"/><rect x="13" y="9" width="1" height="1" fill="#7a7a7a"/><rect x="0" y="10" width="1" height="1" fill="#000"/><rect x="1" y="10" width="1" height="1" fill="#fff"/><rect x="2" y="10" width="1" height="1" fill="#ffff00"/><rect x="3" y="10" width="1" height="1" fill="#fff"/><rect x="4" y="10" width="1" height="1" fill="#fff"/><rect x="5" y="10" width="1" height="1" fill="#fff"/><rect x="6" y="10" width="1" height="1" fill="#000080"/><rect x="7" y="10" width="1" height="1" fill="#000080"/><rect x="8" y="10" width="1" height="1" fill="#fff"/><rect x="9" y="10" width="1" height="1" fill="#fff"/><rect x="10" y="10" width="1" height="1" fill="#ffff00"/><rect x="11" y="10" width="1" height="1" fill="#fff"/><rect x="12" y="10" width="1" height="1" fill="#000"/><rect x="13" y="10" width="1" height="1" fill="#7a7a7a"/><rect x="0" y="11" width="1" height="1" fill="#000"/><rect x="1" y="11" width="1" height="1" fill="#fff"/><rect x="2" y="11" width="1" height="1" fill="#fff"/><rect x="3" y="11" width="1" height="1" fill="#fff"/><rect x="4" y="11" width="1" height="1" fill="#ffff00"/><rect x="5" y="11" width="1" height="1" fill="#fff"/><rect x="6" y="11" width="1" height="1" fill="#fff"/><rect x="7" y="11" width="1" height="1" fill="#fff"/><rect x="8" y="11" width="1" height="1" fill="#ffff00"/><rect x="9" y="11" width="1" height="1" fill="#fff"/><rect x="10" y="11" width="1" height="1" fill="#fff"/><rect x="11" y="11" width="1" height="1" fill="#fff"/><rect x="12" y="11" width="1" height="1" fill="#000"/><rect x="13" y="11" width="1" height="1" fill="#7a7a7a"/><rect x="1" y="12" width="1" height="1" fill="#000"/><rect x="2" y="12" width="1" height="1" fill="#000"/><rect x="3" y="12" width="1" height="1" fill="#000"/><rect x="4" y="12" width="1" height="1" fill="#000"/><rect x="5" y="12" width="1" height="1" fill="#000"/><rect x="6" y="12" width="1" height="1" fill="#000"/><rect x="7" y="12" width="1" height="1" fill="#000"/><rect x="8" y="12" width="1" height="1" fill="#fff"/><rect x="9" y="12" width="1" height="1" fill="#fff"/><rect x="10" y="12" width="1" height="1" fill="#000"/><rect x="11" y="12" width="1" height="1" fill="#000"/><rect x="13" y="12" width="1" height="1" fill="#7a7a7a"/><rect x="2" y="13" width="1" height="1" fill="#7a7a7a"/><rect x="3" y="13" width="1" height="1" fill="#7a7a7a"/><rect x="4" y="13" width="1" height="1" fill="#7a7a7a"/><rect x="5" y="13" width="1" height="1" fill="#7a7a7a"/><rect x="6" y="13" width="1" height="1" fill="#7a7a7a"/><rect x="7" y="13" width="1" height="1" fill="#7a7a7a"/><rect x="8" y="13" width="1" height="1" fill="#000"/><rect x="9" y="13" width="1" height="1" fill="#ffff00"/><rect x="10" y="13" width="1" height="1" fill="#000"/><rect x="11" y="13" width="1" height="1" fill="#7a7a7a"/><rect x="12" y="13" width="1" height="1" fill="#7a7a7a"/><rect x="9" y="14" width="1" height="1" fill="#000"/><rect x="10" y="14" width="1" height="1" fill="#000"/><rect x="10" y="15" width="1" height="1" fill="#000"/></svg>
<svg style="left:21px;top:818px" width="14" height="16" shape-rendering="crispEdges"><rect x="1" y="0" width="1" height="1" fill="#000"/><rect x="2" y="0" width="1" height="1" fill="#000"/><rect x="3" y="0" width="1" height="1" fill="#000"/><rect x="4" y="0" width="1" height="1" fill="#000"/><rect x="5" y="0" width="1" height="1" fill="#000"/><rect x="6" y="0" width="1" height="1" fill="#000"/><rect x="7" y="0" width="1" height="1" fill="#000"/><rect x="8" y="0" width="1" height="1" fill="#000"/><rect x="9" y="0" width="1" height="1" fill="#000"/><rect x="10" y="0" width="1" height="1" fill="#000"/><rect x="11" y="0" width="1" height="1" fill="#000"/><rect x="0" y="1" width="1" height="1" fill="#000"/><rect x="1" y="1" width="1" height="1" fill="#fff"/><rect x="2" y="1" width="1" height="1" fill="#fff"/><rect x="3" y="1" width="1" height="1" fill="#fff"/><rect x="4" y="1" width="1" height="1" fill="#ffff00"/><rect x="5" y="1" width="1" height="1" fill="#fff"/><rect x="6" y="1" width="1" height="1" fill="#fff"/><rect x="7" y="1" width="1" height="1" fill="#fff"/><rect x="8" y="1" width="1" height="1" fill="#ffff00"/><rect x="9" y="1" width="1" height="1" fill="#fff"/><rect x="10" y="1" width="1" height="1" fill="#fff"/><rect x="11" y="1" width="1" height="1" fill="#fff"/><rect x="12" y="1" width="1" height="1" fill="#000"/><rect x="0" y="2" width="1" height="1" fill="#000"/><rect x="1" y="2" width="1" height="1" fill="#fff"/><rect x="2" y="2" width="1" height="1" fill="#ffff00"/><rect x="3" y="2" width="1" height="1" fill="#fff"/><rect x="4" y="2" width="1" height="1" fill="#fff"/><rect x="5" y="2" width="1" height="1" fill="#fff"/><rect x="6" y="2" width="1" height="1" fill="#ffff00"/><rect x="7" y="2" width="1" height="1" fill="#fff"/><rect x="8" y="2" width="1" height="1" fill="#fff"/><rect x="9" y="2" width="1" height="1" fill="#fff"/><rect x="10" y="2" width="1" height="1" fill="#ffff00"/><rect x="11" y="2" width="1" height="1" fill="#fff"/><rect x="12" y="2" width="1" height="1" fill="#000"/><rect x="13" y="2" width="1" height="1" fill="#7a7a7a"/><rect x="0" y="3" width="1" height="1" fill="#000"/><rect x="1" y="3" width="1" height="1" fill="#fff"/><rect x="2" y="3" width="1" height="1" fill="#fff"/><rect x="3" y="3" width="1" height="1" fill="#fff"/><rect x="4" y="3" width="1" height="1" fill="#ffff00"/><rect x="5" y="3" width="1" height="1" fill="#000080"/><rect x="6" y="3" width="1" height="1" fill="#000080"/><rect x="7" y="3" width="1" height="1" fill="#000080"/><rect x="8" y="3" width="1" height="1" fill="#000080"/><rect x="9" y="3" width="1" height="1" fill="#fff"/><rect x="10" y="3" width="1" height="1" fill="#fff"/><rect x="11" y="3" width="1" height="1" fill="#fff"/><rect x="12" y="3" width="1" height="1" fill="#000"/><rect x="13" y="3" width="1" height="1" fill="#7a7a7a"/><rect x="0" y="4" width="1" height="1" fill="#000"/><rect x="1" y="4" width="1" height="1" fill="#fff"/><rect x="2" y="4" width="1" height="1" fill="#ffff00"/><rect x="3" y="4" width="1" height="1" fill="#fff"/><rect x="4" y="4" width="1" height="1" fill="#000080"/><rect x="5" y="4" width="1" height="1" fill="#000080"/><rect x="6" y="4" width="1" height="1" fill="#ffff00"/><rect x="7" y="4" width="1" height="1" fill="#fff"/><rect x="8" y="4" width="1" height="1" fill="#000080"/><rect x="9" y="4" width="1" height="1" fill="#000080"/><rect x="10" y="4" width="1" height="1" fill="#ffff00"/><rect x="11" y="4" width="1" height="1" fill="#fff"/><rect x="12" y="4" width="1" height="1" fill="#000"/><rect x="13" y="4" width="1" height="1" fill="#7a7a7a"/><rect x="0" y="5" width="1" height="1" fill="#000"/><rect x="1" y="5" width="1" height="1" fill="#fff"/><rect x="2" y="5" width="1" height="1" fill="#fff"/><rect x="3" y="5" width="1" height="1" fill="#fff"/><rect x="4" y="5" width="1" height="1" fill="#000080"/><rect x="5" y="5" width="1" height="1" fill="#000080"/><rect x="6" y="5" width="1" height="1" fill="#fff"/><rect x="7" y="5" width="1" height="1" fill="#fff"/><rect x="8" y="5" width="1" height="1" fill="#000080"/><rect x="9" y="5" width="1" height="1" fill="#000080"/><rect x="10" y="5" width="1" height="1" fill="#fff"/><rect x="11" y="5" width="1" height="1" fill="#fff"/><rect x="12" y="5" width="1" height="1" fill="#000"/><rect x="13" y="5" width="1" height="1" fill="#7a7a7a"/><rect x="0" y="6" width="1" height="1" fill="#000"/><rect x="1" y="6" width="1" height="1" fill="#fff"/><rect x="2" y="6" width="1" height="1" fill="#ffff00"/><rect x="3" y="6" width="1" height="1" fill="#fff"/><rect x="4" y="6" width="1" height="1" fill="#fff"/><rect x="5" y="6" width="1" height="1" fill="#fff"/><rect x="6" y="6" width="1" height="1" fill="#ffff00"/><rect x="7" y="6" width="1" height="1" fill="#000080"/><rect x="8" y="6" width="1" height="1" fill="#000080"/><rect x="9" y="6" width="1" height="1" fill="#fff"/><rect x="10" y="6" width="1" height="1" fill="#ffff00"/><rect x="11" y="6" width="1" height="1" fill="#fff"/><rect x="12" y="6" width="1" height="1" fill="#000"/><rect x="13" y="6" width="1" height="1" fill="#7a7a7a"/><rect x="0" y="7" width="1" height="1" fill="#000"/><rect x="1" y="7" width="1" height="1" fill="#fff"/><rect x="2" y="7" width="1" height="1" fill="#fff"/><rect x="3" y="7" width="1" height="1" fill="#fff"/><rect x="4" y="7" width="1" height="1" fill="#ffff00"/><rect x="5" y="7" width="1" height="1" fill="#fff"/><rect x="6" y="7" width="1" height="1" fill="#000080"/><rect x="7" y="7" width="1" height="1" fill="#000080"/><rect x="8" y="7" width="1" height="1" fill="#ffff00"/><rect x="9" y="7" width="1" height="1" fill="#fff"/><rect x="10" y="7" width="1" height="1" fill="#fff"/><rect x="11" y="7" width="1" height="1" fill="#fff"/><rect x="12" y="7" width="1" height="1" fill="#000"/><rect x="13" y="7" width="1" height="1" fill="#7a7a7a"/><rect x="0" y="8" width="1" height="1" fill="#000"/><rect x="1" y="8" width="1" height="1" fill="#fff"/><rect x="2" y="8" width="1" height="1" fill="#ffff00"/><rect x="3" y="8" width="1" height="1" fill="#fff"/><rect x="4" y="8" width="1" height="1" fill="#fff"/><rect x="5" y="8" width="1" height="1" fill="#fff"/><rect x="6" y="8" width="1" height="1" fill="#000080"/><rect x="7" y="8" width="1" height="1" fill="#fff"/><rect x="8" y="8" width="1" height="1" fill="#fff"/><rect x="9" y="8" width="1" height="1" fill="#fff"/><rect x="10" y="8" width="1" height="1" fill="#ffff00"/><rect x="11" y="8" width="1" height="1" fill="#fff"/><rect x="12" y="8" width="1" height="1" fill="#000"/><rect x="13" y="8" width="1" height="1" fill="#7a7a7a"/><rect x="0" y="9" width="1" height="1" fill="#000"/><rect x="1" y="9" width="1" height="1" fill="#fff"/><rect x="2" y="9" width="1" height="1" fill="#fff"/><rect x="3" y="9" width="1" height="1" fill="#fff"/><rect x="4" y="9" width="1" height="1" fill="#ffff00"/><rect x="5" y="9" width="1" height="1" fill="#fff"/><rect x="6" y="9" width="1" height="1" fill="#fff"/><rect x="7" y="9" width="1" height="1" fill="#fff"/><rect x="8" y="9" width="1" height="1" fill="#ffff00"/><rect x="9" y="9" width="1" height="1" fill="#fff"/><rect x="10" y="9" width="1" height="1" fill="#fff"/><rect x="11" y="9" width="1" height="1" fill="#fff"/><rect x="12" y="9" width="1" height="1" fill="#000"/><rect x="13" y="9" width="1" height="1" fill="#7a7a7a"/><rect x="0" y="10" width="1" height="1" fill="#000"/><rect x="1" y="10" width="1" height="1" fill="#fff"/><rect x="2" y="10" width="1" height="1" fill="#ffff00"/><rect x="3" y="10" width="1" height="1" fill="#fff"/><rect x="4" y="10" width="1" height="1" fill="#fff"/><rect x="5" y="10" width="1" height="1" fill="#fff"/><rect x="6" y="10" width="1" height="1" fill="#000080"/><rect x="7" y="10" width="1" height="1" fill="#000080"/><rect x="8" y="10" width="1" height="1" fill="#fff"/><rect x="9" y="10" width="1" height="1" fill="#fff"/><rect x="10" y="10" width="1" height="1" fill="#ffff00"/><rect x="11" y="10" width="1" height="1" fill="#fff"/><rect x="12" y="10" width="1" height="1" fill="#000"/><rect x="13" y="10" width="1" height="1" fill="#7a7a7a"/><rect x="0" y="11" width="1" height="1" fill="#000"/><rect x="1" y="11" width="1" height="1" fill="#fff"/><rect x="2" y="11" width="1" height="1" fill="#fff"/><rect x="3" y="11" width="1" height="1" fill="#fff"/><rect x="4" y="11" width="1" height="1" fill="#ffff00"/><rect x="5" y="11" width="1" height="1" fill="#fff"/><rect x="6" y="11" width="1" height="1" fill="#fff"/><rect x="7" y="11" width="1" height="1" fill="#fff"/><rect x="8" y="11" width="1" height="1" fill="#ffff00"/><rect x="9" y="11" width="1" height="1" fill="#fff"/><rect x="10" y="11" width="1" height="1" fill="#fff"/><rect x="11" y="11" width="1" height="1" fill="#fff"/><rect x="12" y="11" width="1" height="1" fill="#000"/><rect x="13" y="11" width="1" height="1" fill="#7a7a7a"/><rect x="1" y="12" width="1" height="1" fill="#000"/><rect x="2" y="12" width="1" height="1" fill="#000"/><rect x="3" y="12" width="1" height="1" fill="#000"/><rect x="4" y="12" width="1" height="1" fill="#000"/><rect x="5" y="12" width="1" height="1" fill="#000"/><rect x="6" y="12" width="1" height="1" fill="#000"/><rect x="7" y="12" width="1" height="1" fill="#000"/><rect x="8" y="12" width="1" height="1" fill="#fff"/><rect x="9" y="12" width="1" height="1" fill="#fff"/><rect x="10" y="12" width="1" height="1" fill="#000"/><rect x="11" y="12" width="1" height="1" fill="#000"/><rect x="13" y="12" width="1" height="1" fill="#7a7a7a"/><rect x="2" y="13" width="1" height="1" fill="#7a7a7a"/><rect x="3" y="13" width="1" height="1" fill="#7a7a7a"/><rect x="4" y="13" width="1" height="1" fill="#7a7a7a"/><rect x="5" y="13" width="1" height="1" fill="#7a7a7a"/><rect x="6" y="13" width="1" height="1" fill="#7a7a7a"/><rect x="7" y="13" width="1" height="1" fill="#7a7a7a"/><rect x="8" y="13" width="1" height="1" fill="#000"/><rect x="9" y="13" width="1" height="1" fill="#ffff00"/><rect x="10" y="13" width="1" height="1" fill="#000"/><rect x="11" y="13" width="1" height="1" fill="#7a7a7a"/><rect x="12" y="13" width="1" height="1" fill="#7a7a7a"/><rect x="9" y="14" width="1" height="1" fill="#000"/><rect x="10" y="14" width="1" height="1" fill="#000"/><rect x="10" y="15" width="1" height="1" fill="#000"/></svg>
<div style="left:47px;top:813px;width:23px;height:26px;border:1px solid #66a7e8;background:#b5d5f4;box-sizing:border-box"></div>
<svg style="left:48px;top:816px" width="20" height="20" shape-rendering="crispEdges"><rect x="11" y="4" width="1" height="1" fill="#fff"/><rect x="12" y="4" width="1" height="1" fill="#000"/><rect x="10" y="5" width="1" height="1" fill="#fff"/><rect x="11" y="5" width="1" height="1" fill="#fff"/><rect x="12" y="5" width="1" height="1" fill="#fff"/><rect x="13" y="5" width="1" height="1" fill="#000"/><rect x="9" y="6" width="1" height="1" fill="#fff"/><rect x="10" y="6" width="1" height="1" fill="#fff"/><rect x="11" y="6" width="1" height="1" fill="#fff"/><rect x="12" y="6" width="1" height="1" fill="#0000e0"/><rect x="13" y="6" width="1" height="1" fill="#fff"/><rect x="14" y="6" width="1" height="1" fill="#000"/><rect x="8" y="7" width="1" height="1" fill="#fff"/><rect x="9" y="7" width="1" height="1" fill="#fff"/><rect x="10" y="7" width="1" height="1" fill="#fff"/><rect x="11" y="7" width="1" height="1" fill="#fff"/><rect x="12" y="7" width="1" height="1" fill="#fff"/><rect x="13" y="7" width="1" height="1" fill="#0000e0"/><rect x="14" y="7" width="1" height="1" fill="#fff"/><rect x="15" y="7" width="1" height="1" fill="#000"/><rect x="7" y="8" width="1" height="1" fill="#fff"/><rect x="8" y="8" width="1" height="1" fill="#fff"/><rect x="9" y="8" width="1" height="1" fill="#0000e0"/><rect x="10" y="8" width="1" height="1" fill="#0000e0"/><rect x="11" y="8" width="1" height="1" fill="#fff"/><rect x="12" y="8" width="1" height="1" fill="#fff"/><rect x="13" y="8" width="1" height="1" fill="#0000e0"/><rect x="14" y="8" width="1" height="1" fill="#fff"/><rect x="15" y="8" width="1" height="1" fill="#fff"/><rect x="16" y="8" width="1" height="1" fill="#000"/><rect x="7" y="9" width="1" height="1" fill="#000"/><rect x="8" y="9" width="1" height="1" fill="#fff"/><rect x="9" y="9" width="1" height="1" fill="#fff"/><rect x="10" y="9" width="1" height="1" fill="#0000e0"/><rect x="11" y="9" width="1" height="1" fill="#0000e0"/><rect x="12" y="9" width="1" height="1" fill="#fff"/><rect x="13" y="9" width="1" height="1" fill="#0000e0"/><rect x="14" y="9" width="1" height="1" fill="#fff"/><rect x="15" y="9" width="1" height="1" fill="#fff"/><rect x="16" y="9" width="1" height="1" fill="#fff"/><rect x="8" y="10" width="1" height="1" fill="#000"/><rect x="9" y="10" width="1" height="1" fill="#fff"/><rect x="10" y="10" width="1" height="1" fill="#fff"/><rect x="11" y="10" width="1" height="1" fill="#0000e0"/><rect x="12" y="10" width="1" height="1" fill="#0000e0"/><rect x="13" y="10" width="1" height="1" fill="#fff"/><rect x="14" y="10" width="1" height="1" fill="#fff"/><rect x="15" y="10" width="1" height="1" fill="#fff"/><rect x="9" y="11" width="1" height="1" fill="#000"/><rect x="10" y="11" width="1" height="1" fill="#fff"/><rect x="11" y="11" width="1" height="1" fill="#fff"/><rect x="12" y="11" width="1" height="1" fill="#fff"/><rect x="13" y="11" width="1" height="1" fill="#fff"/><rect x="14" y="11" width="1" height="1" fill="#fff"/><rect x="10" y="12" width="1" height="1" fill="#000"/><rect x="11" y="12" width="1" height="1" fill="#fff"/><rect x="12" y="12" width="1" height="1" fill="#fff"/><rect x="13" y="12" width="1" height="1" fill="#fff"/><rect x="11" y="13" width="1" height="1" fill="#808000"/><rect x="12" y="13" width="1" height="1" fill="#808000"/><rect x="11" y="3" width="1" height="1" fill="#000"/><rect x="10" y="4" width="1" height="1" fill="#000"/><rect x="9" y="5" width="1" height="1" fill="#000"/><rect x="8" y="6" width="1" height="1" fill="#000"/><rect x="7" y="7" width="1" height="1" fill="#000"/><rect x="6" y="8" width="1" height="1" fill="#000"/><rect x="17" y="9" width="1" height="1" fill="#000"/><rect x="16" y="10" width="1" height="1" fill="#000"/><rect x="15" y="11" width="1" height="1" fill="#000"/><rect x="14" y="12" width="1" height="1" fill="#000"/><rect x="2" y="9" width="1" height="1" fill="#8c8c8c"/><rect x="2" y="10" width="1" height="1" fill="#8c8c8c"/><rect x="2" y="11" width="1" height="1" fill="#8c8c8c"/><rect x="2" y="12" width="1" height="1" fill="#8c8c8c"/><rect x="2" y="13" width="1" height="1" fill="#8c8c8c"/><rect x="2" y="14" width="1" height="1" fill="#8c8c8c"/><rect x="2" y="15" width="1" height="1" fill="#8c8c8c"/><rect x="2" y="16" width="1" height="1" fill="#8c8c8c"/><rect x="2" y="17" width="1" height="1" fill="#8c8c8c"/><rect x="3" y="9" width="1" height="1" fill="#8c8c8c"/><rect x="4" y="9" width="1" height="1" fill="#8c8c8c"/><rect x="5" y="9" width="1" height="1" fill="#8c8c8c"/><rect x="3" y="10" width="1" height="1" fill="#ffffff"/><rect x="4" y="10" width="1" height="1" fill="#ffff00"/><rect x="3" y="11" width="1" height="1" fill="#ffff00"/><rect x="4" y="11" width="1" height="1" fill="#ffffff"/><rect x="5" y="11" width="1" height="1" fill="#ffff00"/><rect x="6" y="11" width="1" height="1" fill="#ffffff"/><rect x="3" y="12" width="1" height="1" fill="#ffffff"/><rect x="4" y="12" width="1" height="1" fill="#ffff00"/><rect x="5" y="12" width="1" height="1" fill="#ffffff"/><rect x="6" y="12" width="1" height="1" fill="#ffff00"/><rect x="7" y="12" width="1" height="1" fill="#ffffff"/><rect x="8" y="12" width="1" height="1" fill="#ffff00"/><rect x="3" y="13" width="1" height="1" fill="#ffff00"/><rect x="4" y="13" width="1" height="1" fill="#ffffff"/><rect x="5" y="13" width="1" height="1" fill="#ffff00"/><rect x="6" y="13" width="1" height="1" fill="#ffffff"/><rect x="7" y="13" width="1" height="1" fill="#ffff00"/><rect x="8" y="13" width="1" height="1" fill="#ffffff"/><rect x="3" y="14" width="1" height="1" fill="#ffffff"/><rect x="4" y="14" width="1" height="1" fill="#ffff00"/><rect x="5" y="14" width="1" height="1" fill="#ffffff"/><rect x="6" y="14" width="1" height="1" fill="#ffff00"/><rect x="7" y="14" width="1" height="1" fill="#ffffff"/><rect x="3" y="15" width="1" height="1" fill="#ffff00"/><rect x="4" y="15" width="1" height="1" fill="#ffffff"/><rect x="5" y="15" width="1" height="1" fill="#ffff00"/><rect x="6" y="15" width="1" height="1" fill="#ffffff"/><rect x="3" y="16" width="1" height="1" fill="#ffffff"/><rect x="4" y="16" width="1" height="1" fill="#ffff00"/><rect x="5" y="16" width="1" height="1" fill="#ffffff"/><rect x="3" y="17" width="1" height="1" fill="#ffff00"/><rect x="4" y="17" width="1" height="1" fill="#ffffff"/><rect x="9" y="13" width="1" height="1" fill="#808000"/><rect x="10" y="13" width="1" height="1" fill="#808000"/><rect x="13" y="13" width="1" height="1" fill="#808000"/><rect x="14" y="13" width="1" height="1" fill="#808000"/><rect x="15" y="13" width="1" height="1" fill="#808000"/><rect x="16" y="13" width="1" height="1" fill="#808000"/><rect x="8" y="14" width="1" height="1" fill="#808000"/><rect x="9" y="14" width="1" height="1" fill="#808000"/><rect x="10" y="14" width="1" height="1" fill="#808000"/><rect x="11" y="14" width="1" height="1" fill="#808000"/><rect x="12" y="14" width="1" height="1" fill="#808000"/><rect x="13" y="14" width="1" height="1" fill="#808000"/><rect x="14" y="14" width="1" height="1" fill="#808000"/><rect x="15" y="14" width="1" height="1" fill="#808000"/><rect x="7" y="15" width="1" height="1" fill="#808000"/><rect x="8" y="15" width="1" height="1" fill="#808000"/><rect x="9" y="15" width="1" height="1" fill="#808000"/><rect x="10" y="15" width="1" height="1" fill="#808000"/><rect x="11" y="15" width="1" height="1" fill="#808000"/><rect x="12" y="15" width="1" height="1" fill="#808000"/><rect x="13" y="15" width="1" height="1" fill="#808000"/><rect x="14" y="15" width="1" height="1" fill="#808000"/><rect x="6" y="16" width="1" height="1" fill="#808000"/><rect x="7" y="16" width="1" height="1" fill="#808000"/><rect x="8" y="16" width="1" height="1" fill="#808000"/><rect x="9" y="16" width="1" height="1" fill="#808000"/><rect x="10" y="16" width="1" height="1" fill="#808000"/><rect x="11" y="16" width="1" height="1" fill="#808000"/><rect x="12" y="16" width="1" height="1" fill="#808000"/><rect x="13" y="16" width="1" height="1" fill="#808000"/><rect x="5" y="17" width="1" height="1" fill="#808000"/><rect x="6" y="17" width="1" height="1" fill="#808000"/><rect x="7" y="17" width="1" height="1" fill="#808000"/><rect x="8" y="17" width="1" height="1" fill="#808000"/><rect x="9" y="17" width="1" height="1" fill="#808000"/><rect x="10" y="17" width="1" height="1" fill="#808000"/><rect x="11" y="17" width="1" height="1" fill="#808000"/><rect x="12" y="17" width="1" height="1" fill="#808000"/><rect x="2" y="18" width="1" height="1" fill="#000"/><rect x="3" y="18" width="1" height="1" fill="#000"/><rect x="4" y="18" width="1" height="1" fill="#000"/><rect x="5" y="18" width="1" height="1" fill="#000"/><rect x="6" y="18" width="1" height="1" fill="#000"/><rect x="7" y="18" width="1" height="1" fill="#000"/><rect x="8" y="18" width="1" height="1" fill="#000"/><rect x="9" y="18" width="1" height="1" fill="#000"/><rect x="10" y="18" width="1" height="1" fill="#000"/><rect x="11" y="18" width="1" height="1" fill="#000"/><rect x="12" y="18" width="1" height="1" fill="#000"/><rect x="13" y="17" width="1" height="1" fill="#000"/><rect x="14" y="16" width="1" height="1" fill="#000"/><rect x="15" y="15" width="1" height="1" fill="#000"/><rect x="16" y="14" width="1" height="1" fill="#000"/><rect x="17" y="13" width="1" height="1" fill="#000"/></svg>
</body></html>
